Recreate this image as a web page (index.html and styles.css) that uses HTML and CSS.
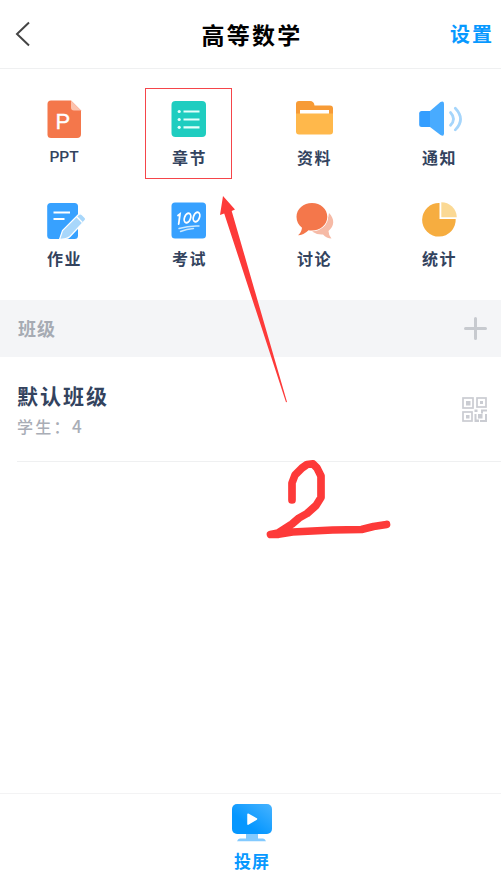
FILE: index.html
```html
<!DOCTYPE html>
<html lang="zh-CN">
<head>
<meta charset="utf-8">
<title>高等数学</title>
<link rel="stylesheet" href="styles.css">
</head>
<body>
<div class="app">
  <header class="header">
    <svg class="back" width="17" height="26" viewBox="0 0 17 26"><path d="M14 1.500 2 13l12 11.500" fill="none" stroke="#444" stroke-width="2"/></svg>
    <h1 class="title">高等数学</h1>
    <span class="settings">设置</span>
  </header>
  <nav class="tools">
    <div class="tool">
      <svg class="icon" viewBox="40 98 48 44">
        <path d="M51 100.500h20l10 10V134a4 4 0 0 1-4 4H51a3.500 3.500 0 0 1-3.500-3.500V104a3.500 3.500 0 0 1 3.500-3.500z" fill="#f4774b"/>
        <path d="M71 100.500l10 10h-7a3 3 0 0 1-3-3z" fill="#fcc2ad"/>
        <text class="icon-p" x="55.500" y="129">P</text>
      </svg>
      <span class="label latin">PPT</span>
    </div>
    <div class="tool selected">
      <svg class="icon" viewBox="165 98 48 44">
        <rect x="171.500" y="101" width="34.500" height="36" rx="4" fill="#1fcdc0"/>
        <path d="M183.500 111.500h16M183.500 119.500h16M183.500 127.300h16" stroke="#e5fffb" stroke-width="2.200"/>
        <g fill="#e5fffb"><circle cx="179.200" cy="111.500" r="1.600"/><circle cx="179.200" cy="119.500" r="1.600"/><circle cx="179.200" cy="127.300" r="1.600"/></g>
      </svg>
      <span class="label">章节</span>
    </div>
    <div class="tool">
      <svg class="icon" viewBox="290 98 48 44">
        <path d="M299 101h11q4 0 4.500 4.500H330q3 0 3 3V118h-37v-14q0-3 3-3z" fill="#f79b36"/>
        <rect x="300" y="110" width="29" height="5" fill="#fff"/>
        <path d="M296 113.500h37v18q0 3-3 3h-31q-3 0-3-3z" fill="#ffb84b"/>
      </svg>
      <span class="label">资料</span>
    </div>
    <div class="tool">
      <svg class="icon" viewBox="415 98 48 44">
        <rect x="419.200" y="111" width="14" height="16" rx="2.500" fill="#349eff"/>
        <path d="M430 111l10.500-9q3.500-1.500 3.500 2v29.500q0 3.500-3.500 1.500l-10.500-8z" fill="#48abff"/>
        <g fill="none" stroke="#a5d5fb" stroke-width="2.700" stroke-linecap="round"><path d="M450.500 112.500q6 6.500 0 12.800"/><path d="M455.300 108.200q10.500 11 0 21.700"/></g>
      </svg>
      <span class="label">通知</span>
    </div>
    <div class="tool">
      <svg class="icon" viewBox="40 199 48 44">
        <rect x="47.200" y="203" width="30.800" height="36" rx="3.500" fill="#37a1ff"/>
        <path d="M53.500 212.500h16.500M53.500 219h11" stroke="#fff" stroke-width="2.200"/>
        <path d="M59.500 239.500l3-9 16-16q2-1.500 4 .500l2.500 2.500q1.500 1.500 0 3L70 236.500q-2 2-4.500 2z" fill="#a8d7fb" stroke="#fff" stroke-width="1.200"/>
        <path d="M76.500 216.500l5.800 6" stroke="#fff" stroke-width="1.300"/>
      </svg>
      <span class="label">作业</span>
    </div>
    <div class="tool">
      <svg class="icon" viewBox="165 199 48 44">
        <rect x="171.500" y="202.500" width="34.500" height="36" rx="3.500" fill="#37a1ff"/>
        <g fill="none" stroke="#fff" stroke-width="1.800" stroke-linecap="round"><path d="M178 215.500l2-1.500-1.300 10"/><ellipse cx="187.500" cy="218" rx="3" ry="4.900" transform="rotate(20 187.500 218)"/><ellipse cx="196.500" cy="217" rx="3" ry="4.900" transform="rotate(20 196.500 217)"/></g>
        <path d="M179 228.500q10-3 20-2.500M180.500 231.500q6-2.500 13-3" fill="none" stroke="#c9e8ff" stroke-width="1.400" stroke-linecap="round"/>
      </svg>
      <span class="label">考试</span>
    </div>
    <div class="tool">
      <svg class="icon" viewBox="290 199 48 44">
        <path d="M329 213c6 6 5.500 13-.5 18q0 4 3 7.500-5 0-8.500-4-6 .500-11-3 15-3 17-18.500z" fill="#f6baa6"/>
        <path d="M312 203c8.500 0 15.300 6 15.300 13.700S320.500 230.500 312 230.500q-2 0-3.500-.3-5 5-10.500 5 3.500-3 4-7.500c-3.500-2.500-5.500-6.500-5.500-11C296.500 209 303.500 203 312 203z" fill="#f4774b" stroke="#fff" stroke-width="1.600" paint-order="stroke"/>
      </svg>
      <span class="label">讨论</span>
    </div>
    <div class="tool">
      <svg class="icon" viewBox="415 199 48 44">
        <path d="M439.500 203a16.800 16.800 0 1 0 16.200 16H439.500z" fill="#f6ad40"/>
        <path d="M441.300 202.200a15.500 15.500 0 0 1 15.500 15h-15.500z" fill="#fbd994"/>
      </svg>
      <span class="label">统计</span>
    </div>
  </nav>
  <section class="section-head">
    <span class="section-title">班级</span>
    <svg width="23" height="23" viewBox="0 0 23 23"><path d="M11.500 1.500v20M1.500 11.500h20" stroke="#c7cacf" stroke-width="3" stroke-linecap="round"/></svg>
  </section>
  <section class="class-row">
    <div>
      <h2 class="class-name">默认班级</h2>
      <p class="students">学生：<span class="count">4</span></p>
    </div>
    <svg class="qr" width="25" height="25" viewBox="0 0 25 25">
      <g fill="none" stroke="#caccd2" stroke-width="1.700"><rect x="1" y="1" width="10" height="10"/><rect x="15" y="1" width="9" height="9"/><rect x="1" y="15" width="9" height="9"/></g>
      <g fill="#caccd2"><rect x="4" y="4" width="4.500" height="4.500"/><rect x="18" y="4" width="3" height="3"/><rect x="4" y="18" width="3.500" height="3.500"/><path d="M12.500 12.500h3v2.500h-3zM19 12.500h6v2h-4v2h-2zM16 17h4.500v4.500H16zM12.500 17h2v5.500H17V25h-4.500zM23 17h2v8h-7v-2h5z"/></g>
    </svg>
  </section>
  <footer class="footer">
    <svg width="42" height="40" viewBox="0 0 42 40">
      <defs><linearGradient id="screen" x1="0" y1="1" x2="1" y2="0"><stop offset=".35" stop-color="#0697ff"/><stop offset="1" stop-color="#47b3ff"/></linearGradient></defs>
      <path d="M15 31h12v4.500h5q2 0 3 2.700H6q1-2.700 3-2.700h6z" fill="#83caff"/>
      <rect x="1" y="1" width="40" height="30" rx="5" fill="url(#screen)"/>
      <path d="M17 11.200L25.500 16 17 21.200z" fill="#fff" stroke="#fff" stroke-width="1.500" stroke-linejoin="round"/>
    </svg>
    <span class="cast">投屏</span>
  </footer>
  <svg class="marks" viewBox="0 0 501 877">
    <rect x="145.500" y="88.500" width="86" height="90" fill="none" stroke="#f5454a"/>
    <path d="M223 196l12 13.500-3.300 1.500L287 402l-1 .3L224.200 213.500l-4.200 1.500z" fill="#fd3a39"/>
    <path d="M292 500v-17l3-8 7-7 5-3.500 6-.7 4 4.200 4 8v21.500l-5 8-9 8-8 4.500-7 6-14 9-7.500 1.500 8-.2 14-2.300 40-2 29-.5 12-3 13-2" fill="none" stroke="#fd3a39" stroke-width="7.700" stroke-linecap="round" stroke-linejoin="round"/>
  </svg>
</div>
</body>
</html>
```
FILE: styles.css
```css
* { box-sizing: border-box; }
body {
  margin: 0;
  background: #fff;
  color: #33435e;
  font-family: "Noto Sans CJK SC", sans-serif;
}
h1, h2, p { margin: 0; }
svg { display: block; flex-shrink: 0; }
.app {
  position: relative;
  display: flex;
  flex-direction: column;
  height: 877px;
  overflow: hidden;
}
.header {
  display: grid;
  grid-template-columns: 100px 1fr 100px;
  align-items: center;
  height: 69px;
  border-bottom: 1px solid #eff0f1;
}
.back { margin-left: 15px; }
.title {
  padding: 0 0 1px 3px;
  color: #000;
  font-size: 23px;
  line-height: 34px;
  letter-spacing: 2.3px;
  text-align: center;
}
.settings {
  padding-right: 7px;
  color: #0799ff;
  font-size: 20px;
  font-weight: 700;
  line-height: 30px;
  letter-spacing: 2px;
  text-align: right;
}
.tools {
  display: grid;
  grid-template-columns: repeat(4, 125px);
  grid-auto-rows: 101px;
  height: 231px;
  padding: 29px 0 0 1.5px;
}
.tool {
  display: flex;
  flex-direction: column;
  align-items: center;
}
.icon { width: 48px; height: 44px; }
.icon-p {
  fill: #fff;
  stroke: #fff;
  stroke-width: .4px;
  font: 22px "Liberation Sans", sans-serif;
}
.label {
  padding-left: 1px;
  margin-top: 3px;
  font-size: 16px;
  font-weight: 700;
  line-height: 24px;
  letter-spacing: 1.5px;
}
.latin {
  padding: 0;
  font-family: Roboto, sans-serif;
  font-size: 15.5px;
  font-weight: 500;
  letter-spacing: 0;
}
.section-head {
  display: flex;
  align-items: center;
  justify-content: space-between;
  height: 57px;
  padding: 0 14px 0 18px;
  background: #f4f5f7;
  color: #a6abb3;
  font-size: 18px;
  font-weight: 700;
  letter-spacing: 1px;
}
.section-title { padding-bottom: 2px; }
.class-row {
  display: flex;
  align-items: center;
  justify-content: space-between;
  height: 105px;
  margin-left: 17px;
  padding-right: 14px;
  border-bottom: 1px solid #eff0f1;
}
.class-name {
  font-size: 21px;
  line-height: 32px;
  letter-spacing: 2px;
}
.students {
  margin-top: 2px;
  color: #a9adb6;
  font-size: 16px;
  font-weight: 500;
  line-height: 26px;
  letter-spacing: 2.3px;
}
.count { font-size: 17px; }
.footer {
  display: flex;
  flex-direction: column;
  align-items: center;
  height: 84px;
  margin-top: auto;
  padding: 9px 0 0 3px;
  border-top: 1px solid #f3f3f4;
}
.cast {
  margin-top: 6px;
  color: #0799ff;
  font-size: 17px;
  font-weight: 700;
  line-height: 24px;
  letter-spacing: 1px;
}
.marks {
  position: absolute;
  top: 0;
  left: 0;
  width: 501px;
  height: 877px;
  pointer-events: none;
}
```
